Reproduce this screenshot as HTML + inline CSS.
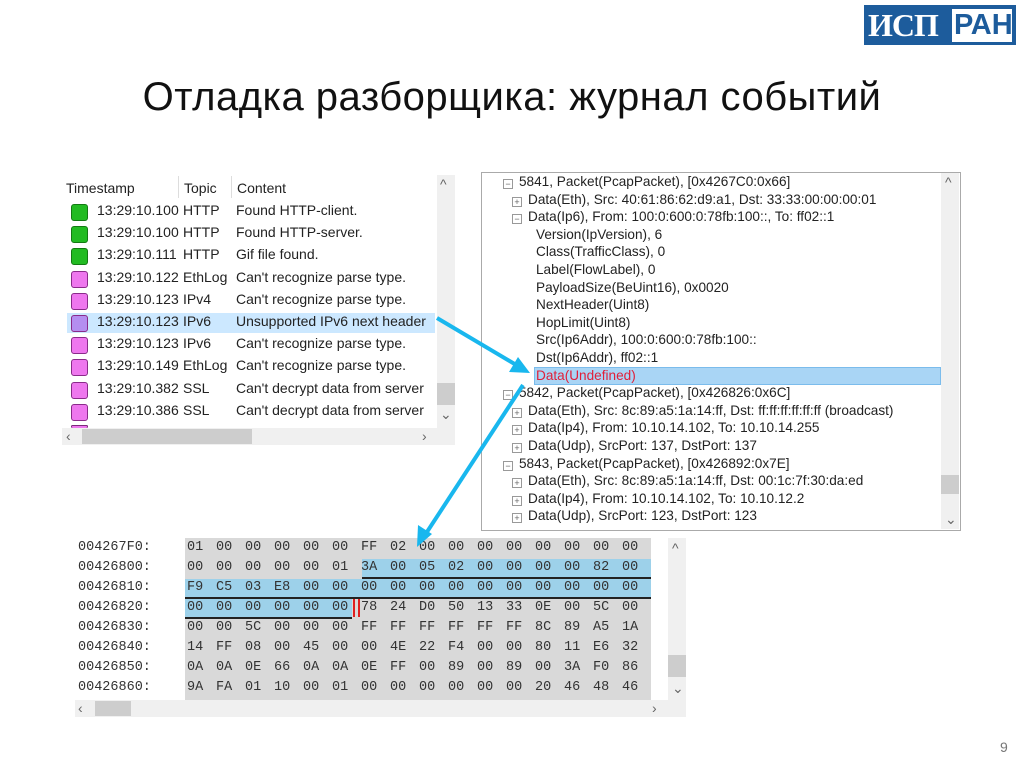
<!DOCTYPE html>
<html><head><meta charset="utf-8"><style>
body{margin:0;width:1024px;height:767px;background:#fff;position:relative;overflow:hidden;font-family:"Liberation Sans","DejaVu Sans",sans-serif}
.a{position:absolute;white-space:nowrap}
.t{font-size:14px;color:#222}
.sq{position:absolute;width:15px;height:15px;border-radius:3px;border:1px solid #7a2a7a}
.h{font-family:"Liberation Mono",monospace;font-size:13.5px;color:#333}
.pm{position:absolute;width:8px;height:8px;border:1px solid #999;font-size:9px;line-height:8px;text-align:center;color:#666}
</style></head><body>
<!-- logo -->
<div class="a" style="left:864px;top:5px;width:152px;height:40px;background:#1d5c9c"></div>
<div class="a" style="left:868px;top:5px;font-family:'Liberation Serif',serif;font-weight:bold;font-size:32px;color:#fff;line-height:40px;letter-spacing:-1px">ИСП</div>
<div class="a" style="left:952px;top:9px;width:60px;height:33px;background:#fff"></div>
<div class="a" style="left:954px;top:9px;font-weight:bold;font-size:29px;color:#1d5c9c;line-height:33px">РАН</div>

<div class="a" style="left:0;width:1024px;top:72px;text-align:center;font-size:40px;color:#111;line-height:50px;letter-spacing:0.5px">Отладка разборщика: журнал событий</div>
<div class="a" style="left:1000px;top:739px;font-size:14px;color:#777">9</div>

<!-- left panel -->
<div class="a" style="left:62px;top:175px;width:393px;height:270px;background:#fff"></div>
<div class="a" style="left:437px;top:175px;width:18px;height:253px;background:#f0f0f0"></div>
<div class="a" style="left:437px;top:383px;width:18px;height:22px;background:#cdcdcd"></div>
<div class="a" style="left:62px;top:428px;width:393px;height:17px;background:#f0f0f0"></div>
<div class="a" style="left:82px;top:429px;width:170px;height:15px;background:#cdcdcd"></div>
<div class="a t" style="left:440px;top:176px;color:#666">^</div>
<div class="a t" style="left:440px;top:406px;color:#666">⌄</div>
<div class="a t" style="left:66px;top:428px;color:#666">‹</div>
<div class="a t" style="left:422px;top:428px;color:#666">›</div>
<div class="a t" style="left:66px;top:180px">Timestamp</div>
<div class="a" style="left:178px;top:176px;width:1px;height:22px;background:#ddd"></div>
<div class="a t" style="left:184px;top:180px">Topic</div>
<div class="a" style="left:231px;top:176px;width:1px;height:22px;background:#ddd"></div>
<div class="a t" style="left:237px;top:180px">Content</div>
<div class="a" style="left:67px;top:313px;width:368px;height:20px;background:#cce8ff"></div>
<div id="rows"></div>

<!-- right panel -->
<div class="a" style="left:481px;top:172px;width:478px;height:357px;border:1px solid #aaa;background:#fff"></div>
<div class="a" style="left:941px;top:173px;width:18px;height:356px;background:#f0f0f0"></div>
<div class="a" style="left:941px;top:475px;width:18px;height:19px;background:#cdcdcd"></div>
<div class="a t" style="left:945px;top:174px;color:#666">^</div>
<div class="a t" style="left:945px;top:511px;color:#666">⌄</div>
<div class="a" style="left:534px;top:367px;width:405px;height:16px;background:#a9d5f5;border:1px solid #7bbcec"></div>
<div id="tree"></div>

<!-- hex panel -->
<div class="a" style="left:185px;top:538px;width:466px;height:162px;background:#d9d9d9"></div>
<div class="a" style="left:668px;top:538px;width:18px;height:162px;background:#f0f0f0"></div>
<div class="a" style="left:668px;top:655px;width:18px;height:22px;background:#cdcdcd"></div>
<div class="a" style="left:75px;top:700px;width:611px;height:17px;background:#f0f0f0"></div>
<div class="a" style="left:95px;top:701px;width:36px;height:15px;background:#cdcdcd"></div>
<div class="a t" style="left:672px;top:540px;color:#666">^</div>
<div class="a t" style="left:672px;top:680px;color:#666">⌄</div>
<div class="a t" style="left:78px;top:700px;color:#666">‹</div>
<div class="a t" style="left:652px;top:700px;color:#666">›</div>
<div class="a" style="left:362px;top:559px;width:289px;height:18px;background:#9dd1ea;border-bottom:2px solid #222"></div>
<div class="a" style="left:185px;top:579px;width:466px;height:18px;background:#9dd1ea;border-bottom:2px solid #222"></div>
<div class="a" style="left:185px;top:599px;width:167px;height:18px;background:#9dd1ea;border-bottom:2px solid #222"></div>
<div class="a" style="left:353px;top:599px;width:2px;height:18px;background:#e02020"></div>
<div class="a" style="left:358px;top:599px;width:2px;height:18px;background:#e02020"></div>
<div id="hex"></div>

<svg class="a" style="left:0;top:0" width="1024" height="767">
<g stroke="#19b7ee" stroke-width="4" fill="#19b7ee">
<line x1="437" y1="318" x2="518" y2="366"/>
<polygon points="530,373 509,372 518,357" stroke="none"/>
<line x1="523" y1="385" x2="425" y2="535"/>
<polygon points="417,547 418,525 432,534" stroke="none"/>
</g></svg>

<script>
var L=[["#22bb22","13:29:10.100","HTTP","Found HTTP-client."],["#22bb22","13:29:10.100","HTTP","Found HTTP-server."],["#22bb22","13:29:10.111","HTTP","Gif file found."],["#ee77ee","13:29:10.122","EthLog","Can't recognize parse type."],["#ee77ee","13:29:10.123","IPv4","Can't recognize parse type."],["#b48ef0","13:29:10.123","IPv6","Unsupported IPv6 next header"],["#ee77ee","13:29:10.123","IPv6","Can't recognize parse type."],["#ee77ee","13:29:10.149","EthLog","Can't recognize parse type."],["#ee77ee","13:29:10.382","SSL","Can't decrypt data from server"],["#ee77ee","13:29:10.386","SSL","Can't decrypt data from server"]];
var h="";L.forEach(function(r,i){var y=202+i*22.2;var bc=r[0]=="#22bb22"?"#137a13":"#8a2a8a";
h+='<div class="sq" style="left:71px;top:'+(y+2)+'px;background:'+r[0]+';border-color:'+bc+'"></div><div class="a t" style="left:97px;top:'+y+'px">'+r[1]+'</div><div class="a t" style="left:183px;top:'+y+'px">'+r[2]+'</div><div class="a t" style="left:236px;top:'+y+'px;width:200px;overflow:hidden">'+r[3]+'</div>';});
h+='<div class="sq" style="left:71px;top:425px;height:2px;background:#ee77ee;border-bottom:none"></div>';
document.getElementById("rows").innerHTML=h;
var T=[[0,"-","5841, Packet(PcapPacket), [0x4267C0:0x66]"],[1,"+","Data(Eth), Src: 40:61:86:62:d9:a1, Dst: 33:33:00:00:00:01"],[1,"-","Data(Ip6), From: 100:0:600:0:78fb:100::, To: ff02::1"],[2,"","Version(IpVersion), 6"],[2,"","Class(TrafficClass), 0"],[2,"","Label(FlowLabel), 0"],[2,"","PayloadSize(BeUint16), 0x0020"],[2,"","NextHeader(Uint8)"],[2,"","HopLimit(Uint8)"],[2,"","Src(Ip6Addr), 100:0:600:0:78fb:100::"],[2,"","Dst(Ip6Addr), ff02::1"],[2,"r","Data(Undefined)"],[0,"-","5842, Packet(PcapPacket), [0x426826:0x6C]"],[1,"+","Data(Eth), Src: 8c:89:a5:1a:14:ff, Dst: ff:ff:ff:ff:ff:ff (broadcast)"],[1,"+","Data(Ip4), From: 10.10.14.102, To: 10.10.14.255"],[1,"+","Data(Udp), SrcPort: 137, DstPort: 137"],[0,"-","5843, Packet(PcapPacket), [0x426892:0x7E]"],[1,"+","Data(Eth), Src: 8c:89:a5:1a:14:ff, Dst: 00:1c:7f:30:da:ed"],[1,"+","Data(Ip4), From: 10.10.14.102, To: 10.10.12.2"],[1,"+","Data(Udp), SrcPort: 123, DstPort: 123"]];
h="";T.forEach(function(r,i){var y=174+i*17.6;var x=[519,528,536][r[0]];
if(r[1]=="+"||r[1]=="-")h+='<div class="pm" style="left:'+(x-16)+'px;top:'+(y+5)+'px">'+(r[1]=="+"?"+":"−")+'</div>';
h+='<div class="a t" style="left:'+x+'px;top:'+y+'px;font-size:13.6px;'+(r[1]=="r"?"color:#e0203a":"")+'">'+r[2]+'</div>';});
document.getElementById("tree").innerHTML=h;
var H=[["004267F0:","01 00 00 00 00 00 FF 02 00 00 00 00 00 00 00 00"],["00426800:","00 00 00 00 00 01 3A 00 05 02 00 00 00 00 82 00"],["00426810:","F9 C5 03 E8 00 00 00 00 00 00 00 00 00 00 00 00"],["00426820:","00 00 00 00 00 00 78 24 D0 50 13 33 0E 00 5C 00"],["00426830:","00 00 5C 00 00 00 FF FF FF FF FF FF 8C 89 A5 1A"],["00426840:","14 FF 08 00 45 00 00 4E 22 F4 00 00 80 11 E6 32"],["00426850:","0A 0A 0E 66 0A 0A 0E FF 00 89 00 89 00 3A F0 86"],["00426860:","9A FA 01 10 00 01 00 00 00 00 00 00 20 46 48 46"]];
h="";H.forEach(function(r,i){var y=540+i*20;h+='<div class="a h" style="left:78px;top:'+y+'px">'+r[0]+'</div>';r[1].split(" ").forEach(function(b,j){h+='<div class="a h" style="left:'+(187+j*29)+'px;top:'+y+'px">'+b+'</div>';});});
document.getElementById("hex").innerHTML=h;
</script>
</body></html>
